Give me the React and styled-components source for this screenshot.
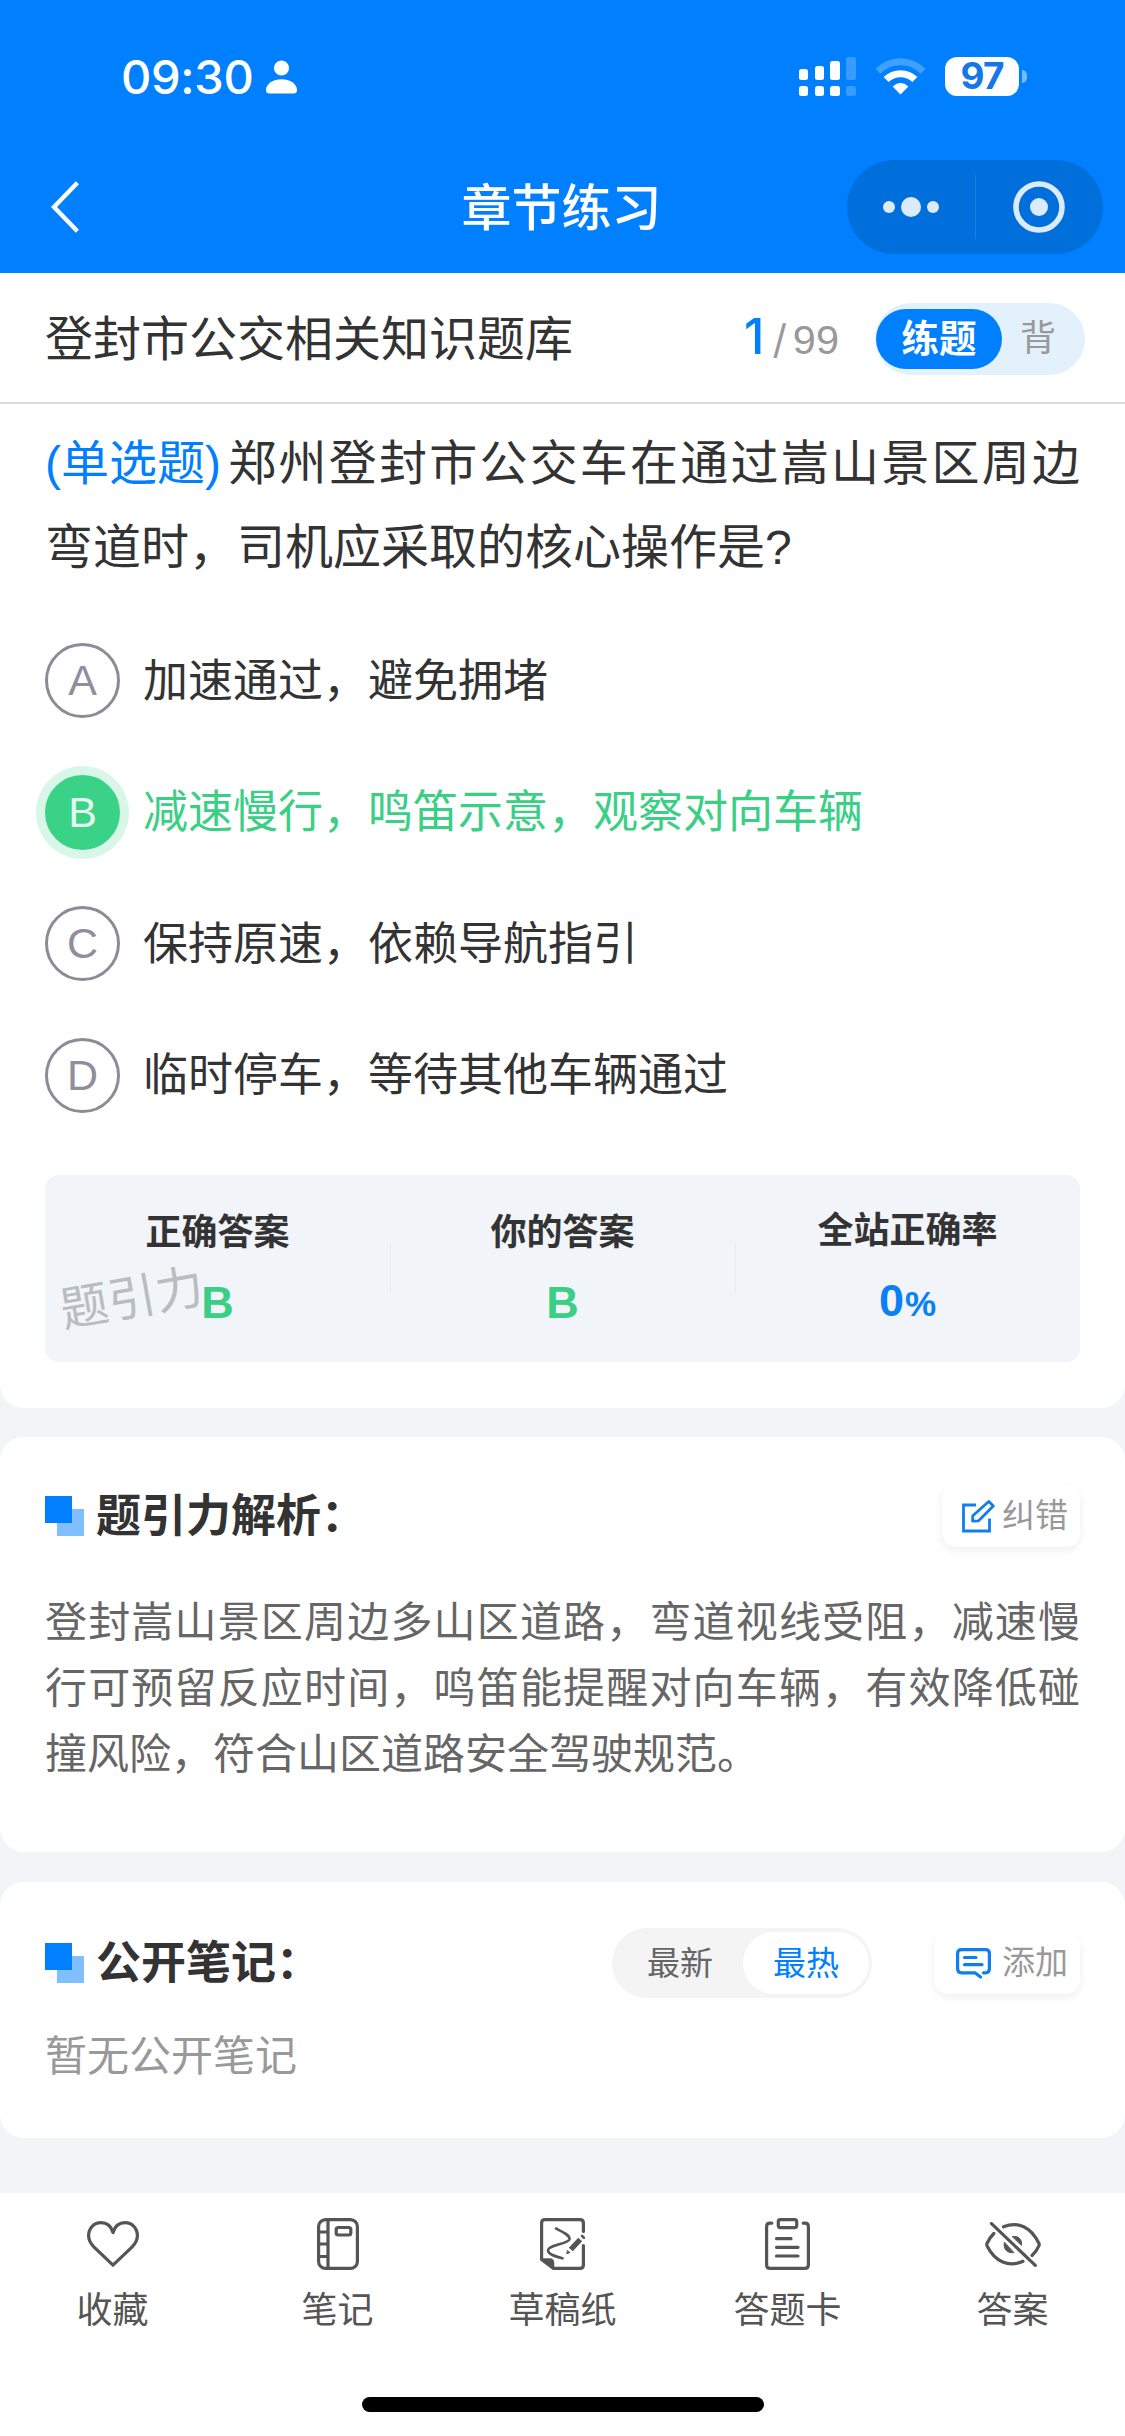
import React, {useState} from 'react';
import styled, {createGlobalStyle} from 'styled-components';

const GlobalStyle = createGlobalStyle`
  *{
    box-sizing:border-box;
  }
  body{
    margin:0;
    background:#f1f5f8;
    font-family:"Liberation Sans", "Noto Sans CJK SC", sans-serif;
    color:#333;
  }
  svg{
    display:block;
    flex:none;
  }
`;

const Page = styled.div`
  width:1125px;
  height:2436px;
  display:flex;
  flex-direction:column;
  overflow:hidden;
`;

const Header = styled.header`
  height:273px;
  flex:none;
  background:#0080ff;
  color:#fff;
`;

const StatusBar = styled.div`
  height:136px;
  display:flex;
  justify-content:space-between;
  align-items:center;
  padding:17px 98px 0 121px;
`;

const StatusGroup = styled.div`
  display:flex;
  align-items:center;
`;

const Time = styled.span`
  width:145px;
  font-family:Inter, sans-serif;
  font-size:47px;
  font-weight:500;
  line-height:48px;
  letter-spacing:-0.3px;
`;

const WifiWrap = styled.div`
  margin:0 19px;
`;

const Battery = styled.div`
  width:74px;
  height:39px;
  border-radius:12px;
  background:#fff;
  color:#1677e6;
  font-family:Inter, sans-serif;
  font-size:37px;
  font-weight:700;
  line-height:38px;
  text-align:center;
  letter-spacing:-1px;
`;

const BatteryCap = styled.div`
  width:5px;
  height:13px;
  margin-left:3px;
  border-radius:0 6px 6px 0;
  background:#74bbff;
`;

const NavBar = styled.div`
  height:137px;
  display:grid;
  grid-template-columns:1fr auto 1fr;
  align-items:center;
  padding:6px 22px 2px 51px;
`;

const NavTitle = styled.h1`
  margin:5px 0 0 -31px;
  font-size:50px;
  font-weight:500;
  line-height:60px;
`;

const Capsule = styled.div`
  justify-self:end;
  width:256px;
  height:94px;
  display:flex;
  align-items:center;
  border-radius:47px;
  background:#006edb;
`;

const CapsulePart = styled.div`
  flex:1;
  display:flex;
  justify-content:center;
  & + &{
    border-left:1px solid #1a7de0;
    height:64px;
    align-items:center;
  }
`;

const SubHeader = styled.div`
  height:131px;
  flex:none;
  display:flex;
  align-items:center;
  padding:2px 40px 0 45px;
  background:#fff;
  border-bottom:2px solid #dcdcdc;
`;

const BankName = styled.div`
  flex:1;
  padding-top:2px;
  font-size:48px;
  line-height:60px;
`;

const Counter = styled.div`
  display:flex;
  align-items:baseline;
  margin-right:36px;
  color:#999;
  font-size:41.5px;
  line-height:60px;
`;

const Current = styled.span`
  margin-right:8px;
  color:#0080ff;
  font-family:Inter, sans-serif;
  font-size:49px;
  font-weight:500;
`;

const Slash = styled.span`
  margin-right:6px;
  font-family:Inter, sans-serif;
  font-size:40px;
`;

const ModeSwitch = styled.div`
  width:210px;
  height:72px;
  display:flex;
  align-items:center;
  border-radius:36px;
  background:#e3f1fd;
`;

const Mode = styled.div`
  width:${({active}) => (active ? 126 : 70)}px;
  height:60px;
  margin-left:1px;
  border-radius:30px;
  background:${({active}) => (active ? '#0080ff' : 'transparent')};
  color:${({active}) => (active ? '#fff' : '#999')};
  font-size:${({active}) => (active ? 37.5 : 36)}px;
  font-weight:${({active}) => (active ? 700 : 400)};
  line-height:60px;
  text-align:center;
`;

const Card = styled.section`
  height:${({h}) => h}px;
  flex:none;
  margin-bottom:${({gap}) => gap}px;
  padding:${({pad}) => pad};
  border-radius:${({first}) => (first ? '0 0 24px 24px' : '24px')};
  background:#fff;
`;

const Question = styled.p`
  height:168px;
  margin:0;
  font-size:48px;
  line-height:84px;
  text-align:justify;
`;

const Kind = styled.span`
  display:inline-block;
  margin-right:5px;
  color:#0080ff;
`;

const Options = styled.div`
  display:flex;
  flex-direction:column;
  gap:56.5px;
  margin-top:53px;
`;

const Option = styled.div`
  height:75px;
  display:flex;
  align-items:center;
  color:${({right}) => (right ? '#3bcf86' : '#333')};
  font-size:45px;
  line-height:75px;
`;

const OptionText = styled.span`
  padding-top:1px;
`;

const Letter = styled.div`
  width:75px;
  height:75px;
  flex:none;
  margin-right:23px;
  border:3px solid ${({right}) => (right ? '#39d287' : '#8c8b98')};
  border-radius:50%;
  background:${({right}) => (right ? '#39d287' : '#fff')};
  box-shadow:${({right}) => (right ? '0 0 0 9px #d9f7e8' : 'none')};
  color:${({right}) => (right ? '#e4fbf0' : '#8f8e9c')};
  font-size:43px;
  line-height:68px;
  text-align:center;
`;

const Stats = styled.div`
  position:relative;
  height:187px;
  display:grid;
  grid-template-columns:repeat(3, 1fr);
  align-items:center;
  margin-top:62px;
  border-radius:14px;
  background:#f1f4f8;
`;

const Stat = styled.div`
  display:flex;
  flex-direction:column;
  align-items:center;
  & + &{
    background:linear-gradient(#e9edf2, #e9edf2) 0 50% / 1px 52px no-repeat;
  }
`;

const StatLabel = styled.div`
  height:69px;
  font-size:36px;
  font-weight:700;
  line-height:54px;
`;

const StatValue = styled.div`
  color:${({blue}) => (blue ? '#0a80f5' : '#3bcf86')};
  font-size:45px;
  font-weight:700;
  line-height:56px;
  small{
    margin-left:1px;
    font-size:35px;
  }
`;

const Watermark = styled.span`
  position:absolute;
  left:15px;
  top:94px;
  color:#b9bcc0;
  font-size:48px;
  line-height:60px;
  transform:rotate(-10deg);
`;

const CardHead = styled.div`
  height:70px;
  display:flex;
  align-items:center;
`;

const Marker = styled.i`
  width:39px;
  height:40px;
  flex:none;
  margin-right:12px;
  background:
    linear-gradient(#0080ff, #0080ff) 0 0 / 27px 27px no-repeat,
    linear-gradient(#80bfff, #80bfff) 12px 13px / 27px 27px no-repeat;
`;

const CardTitle = styled.h2`
  flex:1;
  margin:0;
  padding-top:2px;
  font-size:45px;
  font-weight:700;
  line-height:66px;
`;

const SmallButton = styled.div`
  width:${({w}) => w}px;
  height:62px;
  display:flex;
  align-items:center;
  justify-content:flex-end;
  gap:${({gap}) => gap}px;
  padding-right:12px;
  border-radius:14px;
  background:#fff;
  box-shadow:0 3px 9px rgba(0,0,0,0.07);
  color:#999;
  font-size:33px;
  line-height:62px;
`;

const Explain = styled.p`
  margin:39px 0 0;
  color:#666;
  font-size:42px;
  line-height:66px;
  text-align:justify;
`;

const SortSwitch = styled.div`
  width:260px;
  height:70px;
  display:flex;
  align-items:center;
  margin-right:62px;
  padding:0 3px 0 5px;
  border-radius:35px;
  background:#f4f4f4;
`;

const Sort = styled.div`
  flex:1;
  height:62px;
  border-radius:31px;
  background:${({active}) => (active ? '#fff' : 'transparent')};
  color:${({active}) => (active ? '#0080ff' : '#666')};
  font-size:33px;
  line-height:63px;
  text-align:center;
`;

const Empty = styled.p`
  margin:29px 0 0;
  color:#999;
  font-size:42px;
  line-height:60px;
`;

const TabBar = styled.nav`
  flex:1;
  display:flex;
  flex-direction:column;
  align-items:center;
  background:#fff;
`;

const Tabs = styled.div`
  width:100%;
  height:204px;
  display:grid;
  grid-template-columns:repeat(5, 1fr);
`;

const Tab = styled.div`
  display:flex;
  flex-direction:column;
  align-items:center;
  padding-top:21px;
  color:#555;
  font-size:36px;
  line-height:54px;
`;

const TabIcon = styled.div`
  height:60px;
  display:flex;
  align-items:center;
  margin-bottom:10px;
`;

const HomeIndicator = styled.div`
  width:402px;
  height:15px;
  border-radius:8px;
  background:#000;
`;

const stroke = {
  fill: 'none',
  stroke: 'currentColor',
  strokeWidth: 3.2,
  strokeLinecap: 'round',
  strokeLinejoin: 'round',
};

const PersonIcon = () => (
  <svg width="31" height="34" viewBox="0 0 31 34" fill="#fff">
    <circle cx="15.5" cy="8" r="7.6"/>
    <path d="M0 30C0 24 7 19.3 15.5 19.3S31 24 31 30Q31 33.5 27.5 33.5H3.5Q0 33.5 0 30Z"/>
  </svg>
);

const SignalIcon = () => (
  <svg width="57" height="39" viewBox="0 0 57 39" fill="#fff">
    <rect x="0" y="12" width="9" height="11" rx="2.5"/>
    <rect x="16" y="9" width="9" height="14" rx="2.5"/>
    <rect x="31" y="4" width="10" height="19" rx="2.5"/>
    <rect x="47" y="0" width="10" height="23" rx="2.5" opacity=".22"/>
    <rect x="0" y="29" width="9" height="10" rx="2.5"/>
    <rect x="16" y="29" width="9" height="10" rx="2.5"/>
    <rect x="31" y="29" width="10" height="10" rx="2.5"/>
    <rect x="47" y="29" width="10" height="10" rx="2.5" opacity=".22"/>
  </svg>
);

const WifiIcon = () => (
  <svg width="51" height="37" viewBox="0 0 51 37" fill="none" stroke="#fff">
    <path d="M2.9 13.2A31.6 31.6 0 0 1 48.1 13.2" strokeWidth="7" opacity=".25"/>
    <path d="M11.1 21.6A20.4 20.4 0 0 1 39.9 21.6" strokeWidth="7"/>
    <path d="M25.5 36.5L17.6 28.4Q25.5 21.6 33.4 28.4Z" fill="#fff" stroke="none"/>
  </svg>
);

const BackIcon = () => (
  <svg width="28" height="52" viewBox="0 0 28 52" fill="none" stroke="#fff" strokeWidth="4.4">
    <path d="M26.4 1.8L3 26L26.4 50.2"/>
  </svg>
);

const DotsIcon = () => (
  <svg width="56" height="20" viewBox="0 0 56 20" fill="#dcebfb">
    <circle cx="6" cy="10" r="6"/>
    <circle cx="28" cy="10" r="10"/>
    <circle cx="50" cy="10" r="6"/>
  </svg>
);

const TargetIcon = () => (
  <svg width="52" height="52" viewBox="0 0 52 52">
    <circle cx="26" cy="26" r="23" fill="none" stroke="#dcebfb" strokeWidth="5.6"/>
    <circle cx="26" cy="26" r="9" fill="#dcebfb"/>
  </svg>
);

const EditIcon = () => (
  <svg width="33" height="33" viewBox="0 0 33 33" {...stroke} stroke="#0f7ff0" strokeWidth="2.8">
    <path d="M14 5H1.5V31H27.5V18.5" strokeLinecap="butt" strokeLinejoin="miter"/>
    <path d="M26.8 1.5L31.3 6L16.6 20.8L10.6 21.2L10.8 15.8Z"/>
  </svg>
);

const CommentIcon = () => (
  <svg width="35" height="31" viewBox="0 0 35 31" {...stroke} stroke="#0f7ff0">
    <path d="M24.5 29L19 24.8H5.5Q1.6 24.8 1.6 20.8V5.5Q1.6 1.6 5.5 1.6H29.5Q33.4 1.6 33.4 5.5V20.8Q33.4 24.8 29.5 24.8H27.5"/>
    <path d="M8.5 9.5H20M8.5 16.7H26"/>
  </svg>
);

const HeartIcon = () => (
  <svg width="52" height="46" viewBox="0 0 52 46" {...stroke}>
    <path d="M26 11.5C24 4.8 19.5 1.6 14 1.6C7 1.6 1.6 7.2 1.6 14.6C1.6 19.5 3.8 22.8 6.8 25.8L26 44.2L45.2 25.8C48.2 22.8 50.4 19.5 50.4 14.6C50.4 7.2 45 1.6 38 1.6C32.5 1.6 28 4.8 26 11.5Z"/>
  </svg>
);

const NoteIcon = () => (
  <svg width="42" height="52" viewBox="0 0 42 52" {...stroke}>
    <rect x="1.6" y="1.6" width="38.8" height="48.8" rx="7"/>
    <path d="M11 2V50M2 14H11M2 26H11M2 38.5H11"/>
    <rect x="19.2" y="9.5" width="14.6" height="7.5" rx="2"/>
  </svg>
);

const DraftIcon = () => (
  <svg width="45" height="52" viewBox="0 0 45 52" {...stroke}>
    <path d="M43.4 13.5V5Q43.4 1.6 40 1.6H5Q1.6 1.6 1.6 5V41.5L13.5 50.4H40Q43.4 50.4 43.4 47V27.5"/>
    <path d="M2 41H9.5Q13.5 41 13.5 45V50Z" fill="currentColor" strokeWidth="1.5"/>
    <path d="M16 10.5C22 13.5 30 17 29.5 21.2C28.5 26 8 27 8 32.5C8 36.5 16 38.5 22.5 40.3" strokeWidth="2.6"/>
    <path d="M40.2 21.5L30.8 31.5" strokeWidth="5.4" strokeLinecap="butt"/>
    <path d="M42 17.8L44 19.8" strokeWidth="2.6"/>
    <path d="M27.8 32.6L29.8 34.6L27 35.6Z" fill="currentColor" strokeWidth="1"/>
  </svg>
);

const SheetIcon = () => (
  <svg width="45" height="52" viewBox="0 0 45 52" {...stroke}>
    <path d="M6.8 5.2H5Q1.6 5.2 1.6 8.7V47Q1.6 50.4 5 50.4H40Q43.4 50.4 43.4 47V8.7Q43.4 5.2 40 5.2H38.2"/>
    <rect x="13.3" y="1.6" width="18.4" height="8" rx="2"/>
    <path d="M11.5 20.7H26M11.5 29.3H33M11.5 38H33"/>
  </svg>
);

const EyeOffIcon = () => (
  <svg width="56" height="45" viewBox="0 0 56 45" {...stroke}>
    <path d="M18.5 4.8C33 -1 46 5 54 21.5Q54.5 22.6 54 23.7Q51.5 29.5 47 33.5"/>
    <path d="M8.8 11.5Q4.5 15.8 2 21.5Q1.5 22.6 2 23.7C10 40 24 45.5 38 39.3"/>
    <path d="M6.5 1.6L50.3 43.4"/>
    <path d="M27.5 14.6C33 13.2 37.5 17.5 36.5 23Z" fill="currentColor" strokeWidth="1"/>
    <path d="M19.3 20.5C18 27 22.5 31.8 28.6 30.6Z" fill="currentColor" strokeWidth="1"/>
  </svg>
);

const options = [
  {key: 'A', text: '加速通过，避免拥堵'},
  {key: 'B', text: '减速慢行，鸣笛示意，观察对向车辆', right: true},
  {key: 'C', text: '保持原速，依赖导航指引'},
  {key: 'D', text: '临时停车，等待其他车辆通过'},
];

const tabs = [
  {name: '收藏', Icon: HeartIcon},
  {name: '笔记', Icon: NoteIcon},
  {name: '草稿纸', Icon: DraftIcon},
  {name: '答题卡', Icon: SheetIcon},
  {name: '答案', Icon: EyeOffIcon},
];

export default function App() {
  const [sort, setSort] = useState('最热');

  return (
    <Page>
      <GlobalStyle/>
      <Header>
        <StatusBar>
          <StatusGroup>
            <Time>09:30</Time>
            <PersonIcon/>
          </StatusGroup>
          <StatusGroup>
            <SignalIcon/>
            <WifiWrap><WifiIcon/></WifiWrap>
            <Battery>97</Battery>
            <BatteryCap/>
          </StatusGroup>
        </StatusBar>
        <NavBar>
          <BackIcon/>
          <NavTitle>章节练习</NavTitle>
          <Capsule>
            <CapsulePart><DotsIcon/></CapsulePart>
            <CapsulePart><TargetIcon/></CapsulePart>
          </Capsule>
        </NavBar>
      </Header>

      <SubHeader>
        <BankName>登封市公交相关知识题库</BankName>
        <Counter>
          <Current>1</Current>
          <Slash>/</Slash>
          99
        </Counter>
        <ModeSwitch>
          <Mode active>练题</Mode>
          <Mode>背</Mode>
        </ModeSwitch>
      </SubHeader>

      <Card first h={1004} gap={29} pad="18px 45px 0">
        <Question>
          <Kind>(单选题)</Kind>郑州登封市公交车在通过嵩山景区周边弯道时，司机应采取的核心操作是?
        </Question>
        <Options>
          {options.map(({key, text, right}) => (
            <Option key={key} right={right}>
              <Letter right={right}>{key}</Letter>
              <OptionText>{text}</OptionText>
            </Option>
          ))}
        </Options>
        <Stats>
          <Stat>
            <StatLabel>正确答案</StatLabel>
            <StatValue>B</StatValue>
          </Stat>
          <Stat>
            <StatLabel>你的答案</StatLabel>
            <StatValue>B</StatValue>
          </Stat>
          <Stat>
            <StatLabel>全站正确率</StatLabel>
            <StatValue blue>0<small>%</small></StatValue>
          </Stat>
          <Watermark>题引力</Watermark>
        </Stats>
      </Card>

      <Card h={415} gap={30} pad="44px 45px 0">
        <CardHead>
          <Marker/>
          <CardTitle>题引力解析：</CardTitle>
          <SmallButton w={138} gap={7}>
            <EditIcon/>
            纠错
          </SmallButton>
        </CardHead>
        <Explain>
          登封嵩山景区周边多山区道路，弯道视线受阻，减速慢行可预留反应时间，鸣笛能提醒对向车辆，有效降低碰撞风险，符合山区道路安全驾驶规范。
        </Explain>
      </Card>

      <Card h={256} gap={55} pad="46px 45px 0">
        <CardHead>
          <Marker/>
          <CardTitle>公开笔记：</CardTitle>
          <SortSwitch>
            {['最新', '最热'].map(name => (
              <Sort key={name} active={sort === name} onClick={() => setSort(name)}>{name}</Sort>
            ))}
          </SortSwitch>
          <SmallButton w={146} gap={11}>
            <CommentIcon/>
            添加
          </SmallButton>
        </CardHead>
        <Empty>暂无公开笔记</Empty>
      </Card>

      <TabBar>
        <Tabs>
          {tabs.map(({name, Icon}) => (
            <Tab key={name}>
              <TabIcon><Icon/></TabIcon>
              {name}
            </Tab>
          ))}
        </Tabs>
        <HomeIndicator/>
      </TabBar>
    </Page>
  );
}
